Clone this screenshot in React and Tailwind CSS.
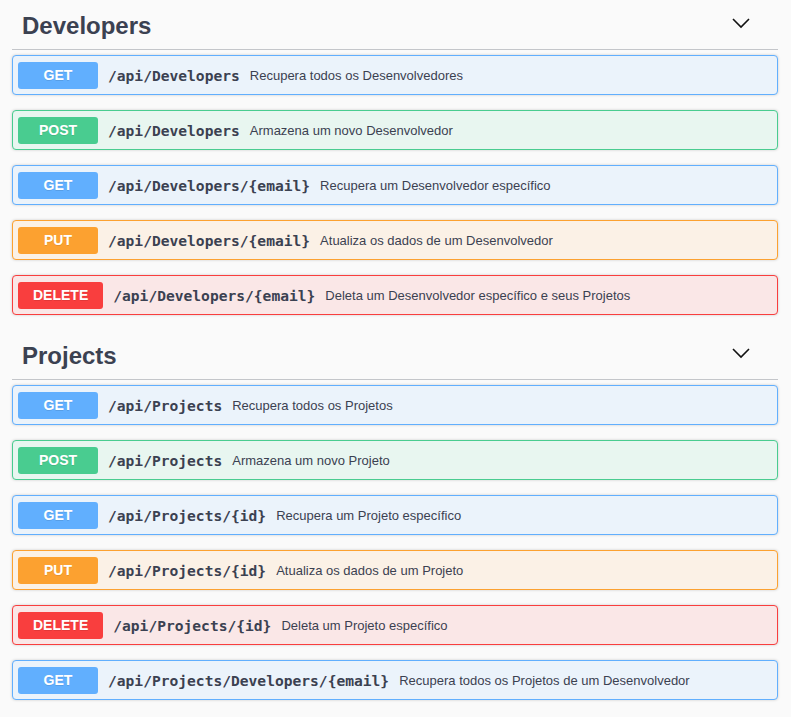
import React from 'react';

const METHODS = {
  GET: { row: 'border-[#61affe] bg-[#ebf3fb]', badge: 'bg-[#61affe]' },
  POST: { row: 'border-[#49cc90] bg-[#e8f6f0]', badge: 'bg-[#49cc90]' },
  PUT: { row: 'border-[#fca130] bg-[#fbf1e6]', badge: 'bg-[#fca130]' },
  DELETE: { row: 'border-[#f93e3e] bg-[#fae7e7]', badge: 'bg-[#f93e3e]' },
};

const sections = [
  {
    name: 'Developers',
    ops: [
      ['GET', '/api/Developers', 'Recupera todos os Desenvolvedores'],
      ['POST', '/api/Developers', 'Armazena um novo Desenvolvedor'],
      ['GET', '/api/Developers/{email}', 'Recupera um Desenvolvedor específico'],
      ['PUT', '/api/Developers/{email}', 'Atualiza os dados de um Desenvolvedor'],
      ['DELETE', '/api/Developers/{email}', 'Deleta um Desenvolvedor específico e seus Projetos'],
    ],
  },
  {
    name: 'Projects',
    ops: [
      ['GET', '/api/Projects', 'Recupera todos os Projetos'],
      ['POST', '/api/Projects', 'Armazena um novo Projeto'],
      ['GET', '/api/Projects/{id}', 'Recupera um Projeto específico'],
      ['PUT', '/api/Projects/{id}', 'Atualiza os dados de um Projeto'],
      ['DELETE', '/api/Projects/{id}', 'Deleta um Projeto específico'],
      ['GET', '/api/Projects/Developers/{email}', 'Recupera todos os Projetos de um Desenvolvedor'],
    ],
  },
];

function Chevron() {
  return (
    <svg width="18" height="12" viewBox="0 0 18 12" fill="none" className="mb-[3px]">
      <path d="M1 2 L9 10 L17 2" stroke="#111" strokeWidth="1.6" />
    </svg>
  );
}

function Operation({ method, path, desc }) {
  const m = METHODS[method];
  return (
    <div
      className={`flex items-center h-[40px] mb-[15px] px-[5px] border rounded-[4px] shadow-[0_0_3px_rgba(0,0,0,0.19)] ${m.row}`}
    >
      <span
        className={`${m.badge} min-w-[80px] h-[27px] px-[15px] flex items-center justify-center rounded-[3px] text-white font-bold text-[14px] [text-shadow:0_1px_0_rgba(0,0,0,0.1)]`}
      >
        {method}
      </span>
      <span className="ml-[10px] mt-[2px] font-['DejaVu_Sans_Mono',monospace] font-bold text-[14.6px] text-[#3b4151]">
        {path}
      </span>
      <span className="ml-[10px] mt-[2px] text-[13px] text-[#3b4151]">{desc}</span>
    </div>
  );
}

export default function App() {
  return (
    <div className="min-h-screen bg-[#fafafa] pl-3 pr-[13px] font-['Liberation_Sans',Arial,sans-serif]">
      {sections.map((s) => (
        <div key={s.name}>
          <div className="flex items-center justify-between h-[50px] pl-[10px] pr-[28px] border-b border-[#c4c6ca] mb-[5px]">
            <h4 className="text-[24px] font-bold text-[#3b4151] mt-[2px]">{s.name}</h4>
            <Chevron />
          </div>
          {s.ops.map(([method, path, desc], i) => (
            <Operation key={i} method={method} path={path} desc={desc} />
          ))}
        </div>
      ))}
    </div>
  );
}
